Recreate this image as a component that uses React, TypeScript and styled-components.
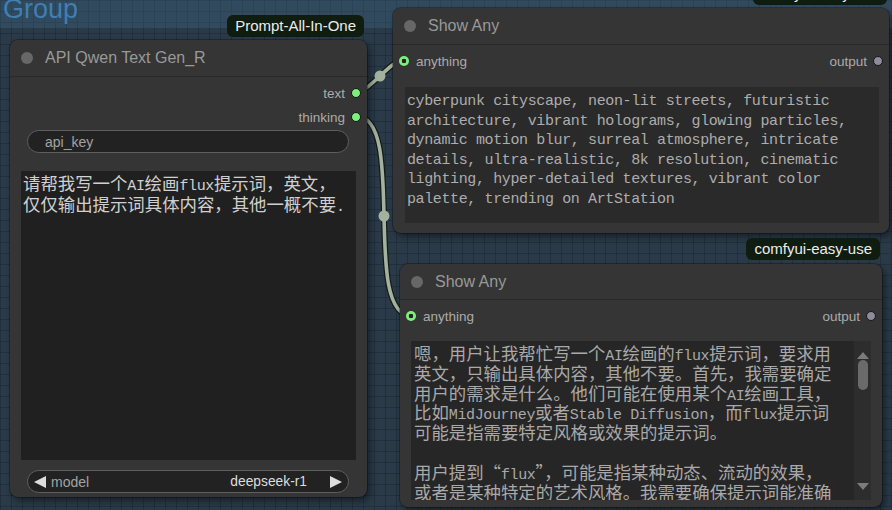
import React from "react";
import styled, { createGlobalStyle } from "styled-components";

const GlobalStyle = createGlobalStyle`
  html, body { margin: 0; padding: 0; width: 892px; height: 510px; overflow: hidden; background: #293947; }
  * { box-sizing: border-box; }
`;

const Canvas = styled.div`
  position: relative;
  width: 892px;
  height: 510px;
  overflow: hidden;
  background-color: #2a3a48;
  background-image:
    linear-gradient(to bottom, rgba(18, 28, 38, 0.32) 1px, transparent 1px),
    linear-gradient(to right, rgba(18, 28, 38, 0.32) 1px, transparent 1px);
  background-size: 11px 11px;
  font-family: "Liberation Sans", Arial, sans-serif;
`;

const GroupBar = styled.div`
  height: 28px;
  padding-left: 3px;
  background: rgba(60, 100, 132, 0.38);
  overflow: hidden;
`;

const GroupTitle = styled.div`
  font-size: 27px;
  line-height: 18px;
  color: #3f7fb2;
`;

const LinkLayer = styled.svg`
  position: absolute;
  left: 0;
  top: 0;
  width: 892px;
  height: 510px;
  z-index: 1;
  pointer-events: none;
`;

const NodeFrame = styled.div<{ $x: number; $y: number; $w: number }>`
  position: absolute;
  left: ${(p) => p.$x}px;
  top: ${(p) => p.$y}px;
  width: ${(p) => p.$w}px;
  z-index: 2;
  display: flex;
  flex-direction: column;
  align-items: flex-end;
`;

const Badge = styled.div<{ $gap: number; $inset: number }>`
  height: 22px;
  line-height: 22px;
  padding: 0 8px;
  margin-right: ${(p) => p.$inset}px;
  margin-bottom: ${(p) => p.$gap}px;
  background: #0f1c10;
  color: #ececec;
  font-size: 15px;
  border-radius: 6px;
  white-space: nowrap;
`;

const Card = styled.div<{ $h: number }>`
  align-self: stretch;
  height: ${(p) => p.$h}px;
  background: #353535;
  border-radius: 8px;
  box-shadow: 0 0 0 1px rgba(0, 0, 0, 0.28), 3px 4px 7px rgba(0, 0, 0, 0.45);
  display: flex;
  flex-direction: column;
  overflow: hidden;
`;

const TitleBar = styled.div<{ $h: number }>`
  flex: none;
  height: ${(p) => p.$h + 1}px;
  display: flex;
  align-items: center;
  gap: 12px;
  padding-left: 11px;
  border-bottom: 1px solid #292929;
  color: #999999;
  font-size: 16px;
  white-space: nowrap;
`;

const TitleDot = styled.span`
  width: 12px;
  height: 12px;
  border-radius: 50%;
  background: #676767;
  flex: none;
`;

const Body = styled.div<{ $top: number }>`
  display: flex;
  flex-direction: column;
  padding-top: ${(p) => p.$top}px;
`;

const SlotRow = styled.div`
  height: 24px;
  display: flex;
  align-items: center;
  justify-content: space-between;
  font-size: 13.5px;
  color: #ababab;
`;

const InSlot = styled.div`
  display: flex;
  align-items: center;
  gap: 7px;
  padding-left: 6px;
`;

const OutSlot = styled.div`
  display: flex;
  align-items: center;
  gap: 6px;
  padding-right: 6px;
  margin-left: auto;
`;

const GreenDot = styled.span`
  width: 10px;
  height: 10px;
  border-radius: 50%;
  background: #7cf07a;
  border: 1.5px solid #141414;
  flex: none;
`;

const GreenRing = styled.span`
  width: 10px;
  height: 10px;
  border-radius: 50%;
  background: radial-gradient(circle, #232323 0 2px, #7cf07a 2.6px);
  flex: none;
`;

const GreyDot = styled.span`
  width: 10px;
  height: 10px;
  border-radius: 50%;
  background: #8d8b9c;
  border: 1.5px solid #161616;
  flex: none;
`;

const Pill = styled.div<{ $top: number }>`
  height: 23px;
  margin: ${(p) => p.$top}px 18px 0 17px;
  border: 1px solid #5f5f5f;
  border-radius: 12px;
  background: #222222;
  display: flex;
  align-items: center;
  padding: 0 6px;
  font-size: 14px;
  color: #aaaaaa;
  white-space: nowrap;
`;

const PillLabel = styled.span<{ $pad: number }>`
  margin-left: ${(p) => p.$pad}px;
  color: #a3a3a3;
`;

const PillValue = styled.span`
  margin-left: auto;
  color: #dddddd;
  font-size: 13.8px;
`;

const ArrowIcon = styled.svg<{ $gap?: number }>`
  width: 12px;
  height: 12px;
  flex: none;
  margin-left: ${(p) => p.$gap ?? 0}px;
`;

const TextBox = styled.div<{
  $top: number;
  $h: number;
  $ml: number;
  $mr: number;
  $bg: string;
}>`
  margin: ${(p) => p.$top}px ${(p) => p.$mr}px 0 ${(p) => p.$ml}px;
  height: ${(p) => p.$h}px;
  background: ${(p) => p.$bg};
  display: flex;
  overflow: hidden;
`;

const TextContent = styled.div<{ $pt: number; $pl: number; $color: string }>`
  flex: 1;
  min-width: 0;
  padding: ${(p) => p.$pt}px 0 0 ${(p) => p.$pl}px;
  font-family: "Liberation Mono", "Noto Sans CJK SC", monospace;
  font-size: 15px;
  letter-spacing: -0.38px;
  color: ${(p) => p.$color};
`;

const Line = styled.div<{ $lh: number }>`
  height: ${(p) => p.$lh}px;
  line-height: ${(p) => p.$lh}px;
  white-space: pre;
`;

const Han = styled.span`
  font-family: "Noto Sans CJK SC", sans-serif;
  font-size: 17.4px;
  letter-spacing: 0;
  font-feature-settings: "fwid";
`;

const ScrollTrack = styled.div`
  width: 17px;
  flex: none;
  background: #2d2d2d;
  display: flex;
  flex-direction: column;
  align-items: center;
  padding: 11px 0 10px;
`;

const Thumb = styled.div`
  width: 10px;
  height: 30px;
  border-radius: 5px;
  background: #6a6a6a;
  margin-top: 1px;
`;

const Spacer = styled.div`
  flex: 1;
`;

const ScrollArrow = styled.svg`
  width: 12px;
  height: 7px;
  flex: none;
`;

const CJK = /([\u3000-\u303f\u3400-\u9fff\uff00-\uffef\u201c\u201d]+)/;

function Mixed({ text }: { text: string }) {
  const parts = text.split(CJK);
  return (
    <>
      {parts.map((p, i) =>
        p === "" ? null : i % 2 === 1 ? <Han key={i}>{p}</Han> : <span key={i}>{p}</span>
      )}
    </>
  );
}

function Lines({ lines, lh }: { lines: string[]; lh: number }) {
  return (
    <>
      {lines.map((l, i) => (
        <Line key={i} $lh={lh}>
          <Mixed text={l} />
        </Line>
      ))}
    </>
  );
}

const promptLines = ["请帮我写一个AI绘画flux提示词，英文，", "仅仅输出提示词具体内容，其他一概不要."];

const outputLines = [
  "cyberpunk cityscape, neon-lit streets, futuristic",
  "architecture, vibrant holograms, glowing particles,",
  "dynamic motion blur, surreal atmosphere, intricate",
  "details, ultra-realistic, 8k resolution, cinematic",
  "lighting, hyper-detailed textures, vibrant color",
  "palette, trending on ArtStation",
];

const thinkingLines = [
  "嗯，用户让我帮忙写一个AI绘画的flux提示词，要求用",
  "英文，只输出具体内容，其他不要。首先，我需要确定",
  "用户的需求是什么。他们可能在使用某个AI绘画工具，",
  "比如MidJourney或者Stable Diffusion，而flux提示词",
  "可能是指需要特定风格或效果的提示词。",
  "",
  "用户提到“flux”，可能是指某种动态、流动的效果，",
  "或者是某种特定的艺术风格。我需要确保提示词能准确",
];

function Link({ d, mx, my }: { d: string; mx: number; my: number }) {
  return (
    <g>
      <path d={d} fill="none" stroke="#161a16" strokeWidth={6} />
      <path d={d} fill="none" stroke="#a2b29f" strokeWidth={3.6} />
      <circle cx={mx} cy={my} r={5.5} fill="#a2b29f" />
    </g>
  );
}

export default function App() {
  return (
    <>
      <GlobalStyle />
      <Canvas>
        <GroupBar>
          <GroupTitle>Group</GroupTitle>
        </GroupBar>

        <LinkLayer viewBox="0 0 892 510">
          <Link d="M356 92 C370 92 390 60 404 60" mx={380} my={76} />
          <Link d="M356 116 C408 116 360 316 412 316" mx={384} my={216} />
        </LinkLayer>

        <NodeFrame $x={10} $y={15} $w={357}>
          <Badge $gap={3} $inset={3}>Prompt-All-In-One</Badge>
          <Card $h={457}>
            <TitleBar $h={36}>
              <TitleDot />
              API Qwen Text Gen_R
            </TitleBar>
            <Body $top={4}>
              <SlotRow>
                <OutSlot>
                  text
                  <GreenDot />
                </OutSlot>
              </SlotRow>
              <SlotRow>
                <OutSlot>
                  thinking
                  <GreenDot />
                </OutSlot>
              </SlotRow>
              <Pill $top={1}>
                <PillLabel $pad={11}>api_key</PillLabel>
              </Pill>
              <TextBox $top={18} $h={289} $ml={11} $mr={11} $bg="#202020">
                <TextContent $pt={2} $pl={2} $color="#d0d0d0">
                  <Lines lines={promptLines} lh={20.5} />
                </TextContent>
              </TextBox>
              <Pill $top={10}>
                <ArrowIcon viewBox="0 0 12 12">
                  <polygon points="12,0 12,12 0,6" fill="#dddddd" />
                </ArrowIcon>
                <PillLabel $pad={5}>model</PillLabel>
                <PillValue>deepseek-r1</PillValue>
                <ArrowIcon viewBox="0 0 12 12" $gap={23}>
                  <polygon points="0,0 0,12 12,6" fill="#dddddd" />
                </ArrowIcon>
              </Pill>
            </Body>
          </Card>
        </NodeFrame>

        <NodeFrame $x={393} $y={-17} $w={496}>
          <Badge $gap={3} $inset={2}>comfyui-easy-use</Badge>
          <Card $h={225}>
            <TitleBar $h={36}>
              <TitleDot />
              Show Any
            </TitleBar>
            <Body $top={4}>
              <SlotRow>
                <InSlot>
                  <GreenRing />
                  anything
                </InSlot>
                <OutSlot>
                  output
                  <GreyDot />
                </OutSlot>
              </SlotRow>
              <TextBox $top={14} $h={136} $ml={12} $mr={10} $bg="#2a2a2a">
                <TextContent $pt={5} $pl={2} $color="#adadad">
                  <Lines lines={outputLines} lh={19.6} />
                </TextContent>
              </TextBox>
            </Body>
          </Card>
        </NodeFrame>

        <NodeFrame $x={400} $y={238} $w={482}>
          <Badge $gap={4} $inset={2}>comfyui-easy-use</Badge>
          <Card $h={243}>
            <TitleBar $h={35}>
              <TitleDot />
              Show Any
            </TitleBar>
            <Body $top={4}>
              <SlotRow>
                <InSlot>
                  <GreenRing />
                  anything
                </InSlot>
                <OutSlot>
                  output
                  <GreyDot />
                </OutSlot>
              </SlotRow>
              <TextBox $top={13} $h={159} $ml={11} $mr={11} $bg="#262626">
                <TextContent $pt={2} $pl={3} $color="#a9a9a9">
                  <Lines lines={thinkingLines} lh={19.8} />
                </TextContent>
                <ScrollTrack>
                  <ScrollArrow viewBox="0 0 12 7">
                    <polygon points="0,7 12,7 6,0" fill="#7c7c7c" />
                  </ScrollArrow>
                  <Thumb />
                  <Spacer />
                  <ScrollArrow viewBox="0 0 12 7">
                    <polygon points="0,0 12,0 6,7" fill="#7c7c7c" />
                  </ScrollArrow>
                </ScrollTrack>
              </TextBox>
            </Body>
          </Card>
        </NodeFrame>
      </Canvas>
    </>
  );
}
